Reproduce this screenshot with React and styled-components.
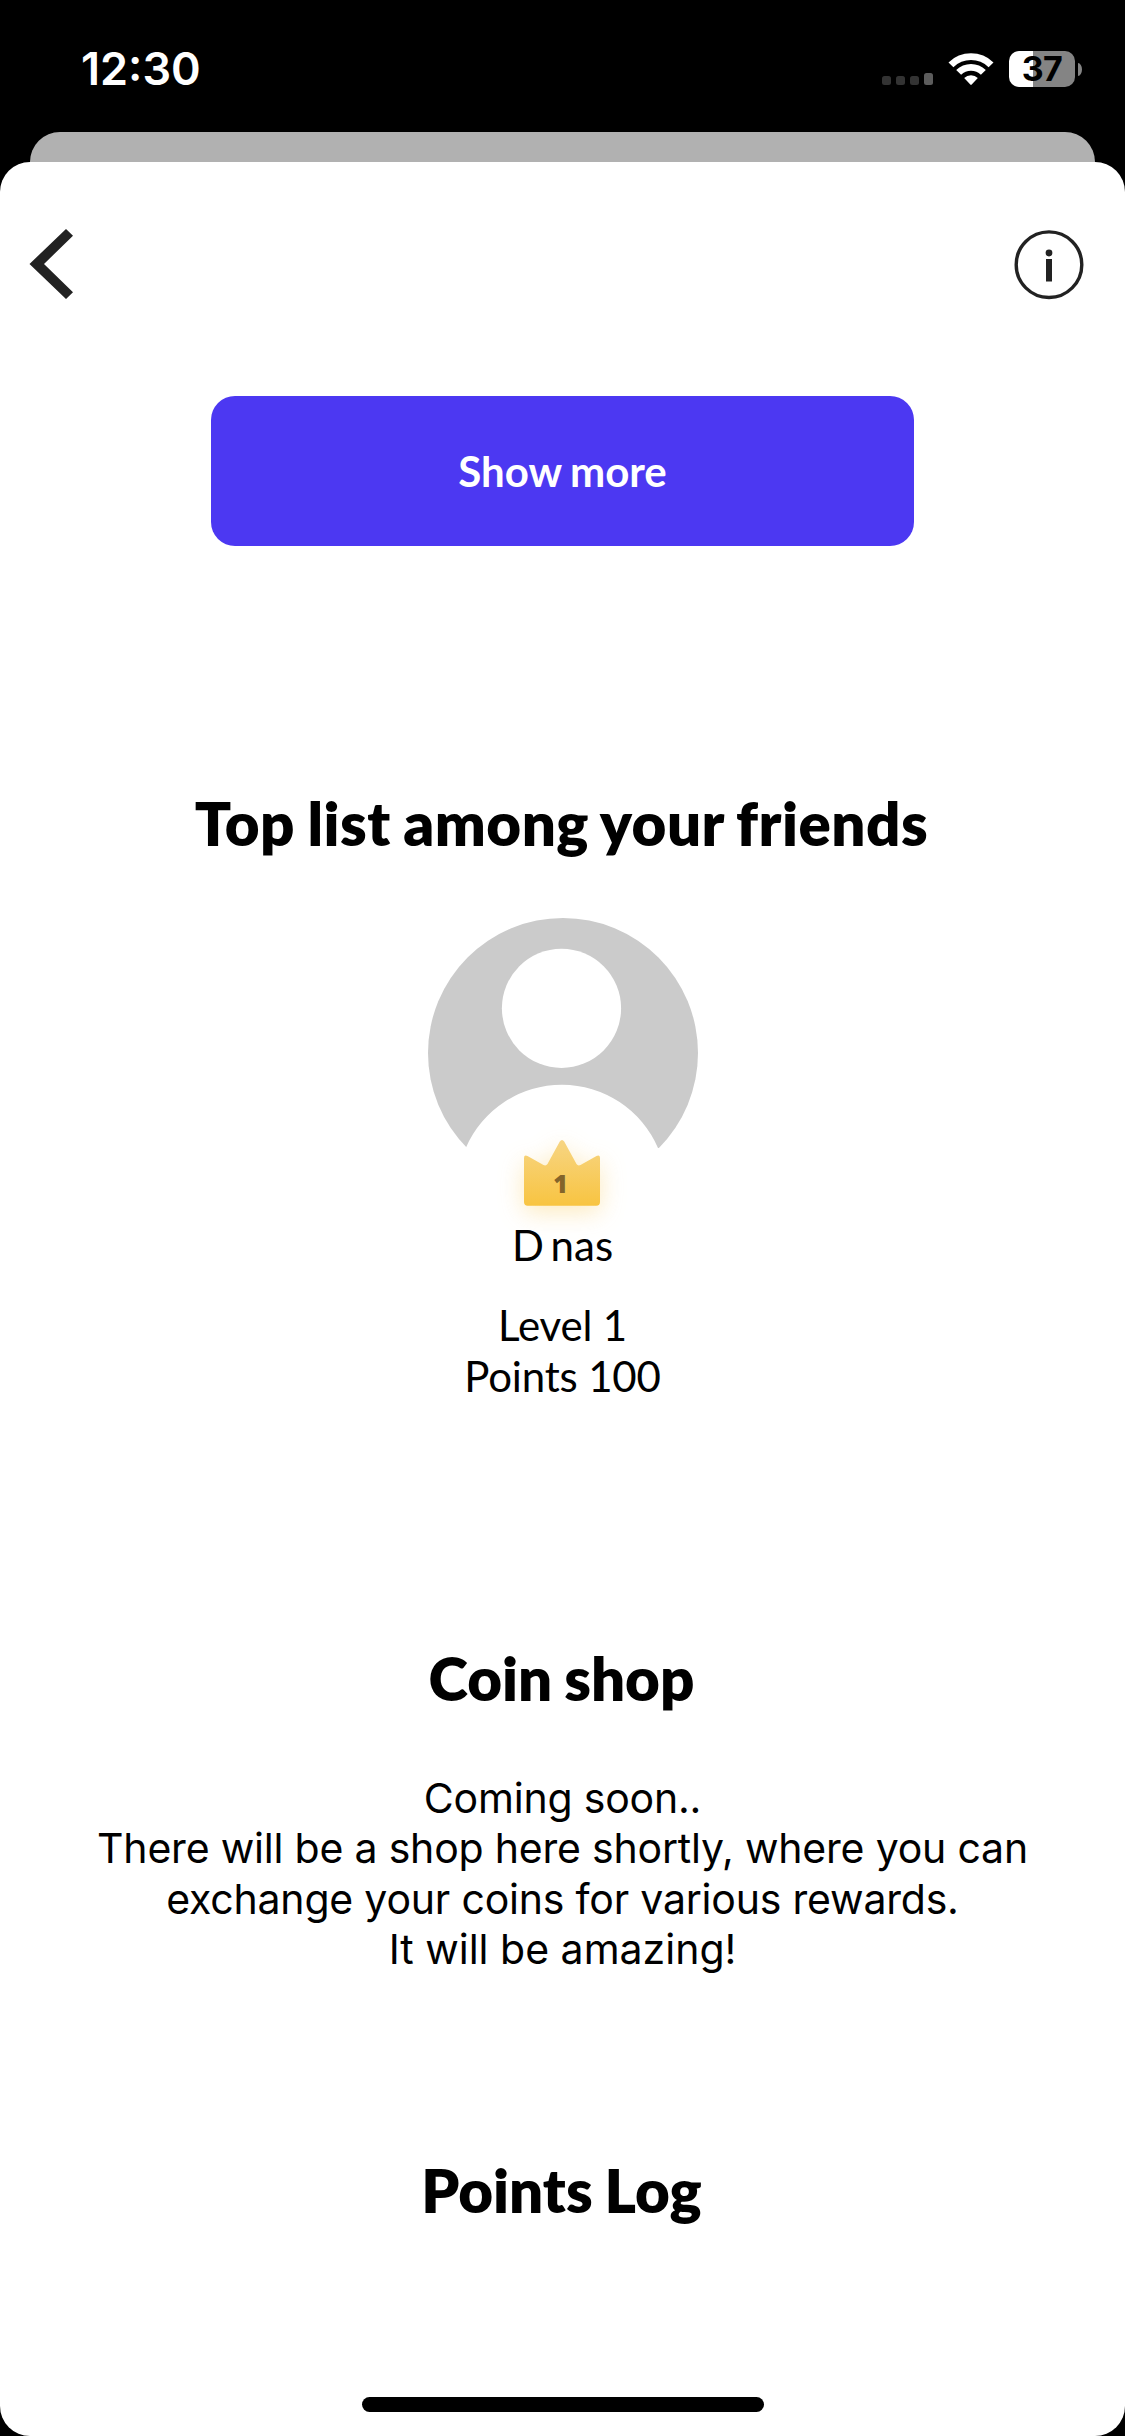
import React from 'react'
import styled, { createGlobalStyle } from 'styled-components'

const GlobalStyle = createGlobalStyle`
* {
    box-sizing: border-box;
}
body {
    margin: 0;
    background: #000;
    font-family: Lato, sans-serif;
    color: #000;
}
`

const copy = [
    { text: "Coming soon..", spacing: "-0.2px" },
    { text: "There will be a shop here shortly, where you can", spacing: "-0.2px" },
    { text: "exchange your coins for various rewards.", spacing: "-0.2px" },
    { text: "It will be amazing!", spacing: "0" },
]

const StatusBar = () => (
    <Status>
        <Clock>12:30</Clock>
        <StatusIcons>
            <Signal>
                <SignalBar />
                <SignalBar />
                <SignalBar />
                <SignalBar $last />
            </Signal>
            <WifiIcon viewBox="0 0 46 34">
                <path d="M0.5 10.4 A32 32 0 0 1 45.5 10.4 L40.6 15.2 A25 25 0 0 0 5.4 15.2 Z" />
                <path d="M8.2 18 A21 21 0 0 1 37.8 18 L32.9 22.8 A14 14 0 0 0 13.1 22.8 Z" />
                <path d="M16.2 26 A9.8 9.8 0 0 1 29.8 26 L23.7 32.6 Q23 33.3 22.3 32.6 Z" />
            </WifiIcon>
            <Battery>
                <BatteryBody>37</BatteryBody>
                <BatteryTip />
            </Battery>
        </StatusIcons>
    </Status>
)

const Avatar = () => (
    <AvatarContainer>
        <svg width="270" height="270" viewBox="0 0 270 270">
            <circle cx="135" cy="135" r="135" fill="#cbcbcb" />
            <circle cx="133.5" cy="90.3" r="59.6" fill="#fff" />
            <path d="M38 229.5 A104.6 104.6 0 0 1 230 230 V270 H38 Z" fill="#fff" />
            <path d="M0 229.5 H38 V270 H0 Z M230 230 H270 V270 H230 Z" fill="#fff" />
        </svg>
        <Crown>
            <CrownShape viewBox="0 0 76 66">
                <defs>
                    <linearGradient id="gold" x1="0" y1="0" x2="0" y2="1">
                        <stop offset="0" stopColor="#f7d583" />
                        <stop offset="1" stopColor="#f8c441" />
                    </linearGradient>
                </defs>
                <path
                    fill="url(#gold)"
                    d="M35.8 1.6 Q38 -1.4 40.2 1.6 L52.5 24 Q54 26.3 56.5 25 L72.5 16 Q76 14.6 76 18 V62 Q76 65.7 72.3 65.7 H3.7 Q0 65.7 0 62 V18 Q0 14.6 3.5 16 L19.5 25 Q22 26.3 23.5 24 Z"
                />
            </CrownShape>
            <Rank>1</Rank>
        </Crown>
    </AvatarContainer>
)

const App = () => {
    return (
        <Screen>
            <GlobalStyle />
            <StatusBar />
            <BackSheet />
            <Sheet>
                <Header>
                    <svg width="44" height="70" viewBox="0 0 44 70">
                        <path d="M37 0 L44 6.7 L15 35 L44 63.3 L37 70 L0.5 35 Z" fill="#222" />
                    </svg>
                    <svg width="70" height="71" viewBox="0 0 70 71">
                        <circle cx="35" cy="35.7" r="32.8" fill="none" stroke="#222" strokeWidth="3.4" />
                        <circle cx="35" cy="24" r="3.4" fill="#222" />
                        <rect x="32" y="30" width="6" height="22.5" fill="#222" />
                    </svg>
                </Header>
                <Button>Show more</Button>
                <Title $top={241} $spacing="0.5px">Top list among your friends</Title>
                <Avatar />
                <Name>D nas</Name>
                <Stat $first>Level 1</Stat>
                <Stat>Points 100</Stat>
                <Title $top={240}>Coin shop</Title>
                <Copy>
                    {copy.map((line) => (
                        <CopyLine key={line.text} $spacing={line.spacing}>{line.text}</CopyLine>
                    ))}
                </Copy>
                <Title $top={180}>Points Log</Title>
                <HomeIndicator />
            </Sheet>
        </Screen>
    )
}

export default App

const Screen = styled.div`
display: flex;
flex-direction: column;
width: 1125px;
height: 2436px;
background: #000;
overflow: hidden;
`
const Status = styled.div`
display: flex;
justify-content: space-between;
height: 132px;
padding: 0 43px 0 81px;
color: #fff;
font-family: Inter, sans-serif;
`
const Clock = styled.div`
padding-top: 41px;
font-size: 45px;
line-height: 56px;
font-weight: 600;
`
const StatusIcons = styled.div`
display: flex;
align-items: flex-start;
`
const Signal = styled.div`
display: flex;
align-items: flex-end;
gap: 5px;
height: 85px;
margin-right: 15px;
`
const SignalBar = styled.span`
width: 9px;
height: ${props => props.$last ? "12px" : "9px"};
border-radius: 2.5px;
background: ${props => props.$last ? "#5c5c5c" : "#333"};
`
const WifiIcon = styled.svg`
width: 46px;
height: 34px;
margin-top: 52px;
fill: #fff;
`
const Battery = styled.div`
display: flex;
align-items: center;
gap: 3px;
margin: 51px 0 0 15px;
`
const BatteryBody = styled.div`
width: 66px;
height: 36px;
border-radius: 10px;
background: linear-gradient(90deg, #fff 24px, #848484 24px);
color: #000;
font-size: 34px;
line-height: 36px;
font-weight: 650;
letter-spacing: -0.5px;
text-align: center;
`
const BatteryTip = styled.div`
width: 4px;
height: 13px;
border-radius: 0 4px 4px 0 / 0 6.5px 6.5px 0;
background: #848484;
`
const BackSheet = styled.div`
height: 30px;
margin: 0 30px;
border-radius: 30px 30px 0 0;
background: #b1b1b1;
`
const Sheet = styled.main`
display: flex;
flex: 1;
flex-direction: column;
align-items: center;
border-radius: 30px;
background: #fff;
`
const Header = styled.header`
display: flex;
justify-content: space-between;
width: 100%;
height: 234px;
padding: 67px 41px 0 29px;
`
const Button = styled.button`
width: 703px;
height: 150px;
padding: 0;
border: 0;
border-radius: 24px;
background: #4c38f2;
color: #fff;
font-family: inherit;
font-size: 42px;
font-weight: 700;
word-spacing: -1.5px;
`
const Title = styled.h2`
margin: ${props => props.$top}px 2px 0 0;
font-size: 60px;
line-height: 72px;
font-weight: 800;
letter-spacing: ${props => props.$spacing || "0"};
word-spacing: -2px;
white-space: nowrap;
`
const AvatarContainer = styled.div`
position: relative;
width: 270px;
height: 270px;
margin-top: 59px;
`
const Crown = styled.div`
position: absolute;
left: 96px;
top: 222px;
width: 76px;
height: 66px;
`
const CrownShape = styled.svg`
display: block;
overflow: visible;
filter: drop-shadow(0 6px 12px rgba(248, 196, 65, 0.35));
`
const Rank = styled.span`
position: absolute;
left: -1px;
top: 29px;
width: 100%;
color: #84642a;
font-family: "Open Sans", sans-serif;
font-size: 25px;
line-height: 28px;
font-weight: 800;
text-align: center;
`
const Name = styled.div`
margin-top: 32px;
font-size: 42px;
line-height: 51px;
word-spacing: -4px;
`
const Stat = styled.div`
margin-top: ${props => props.$first ? "29px" : 0};
font-size: 42px;
line-height: 51px;
letter-spacing: -0.17px;
`
const Copy = styled.div`
display: flex;
flex-direction: column;
align-items: center;
margin-top: 59px;
font-family: Inter, sans-serif;
font-size: 41px;
line-height: 50.3px;
`
const CopyLine = styled.span`
letter-spacing: ${props => props.$spacing};
white-space: nowrap;
`
const HomeIndicator = styled.div`
width: 402px;
height: 15px;
margin: auto 0 24px;
border-radius: 8px;
background: #000;
`
